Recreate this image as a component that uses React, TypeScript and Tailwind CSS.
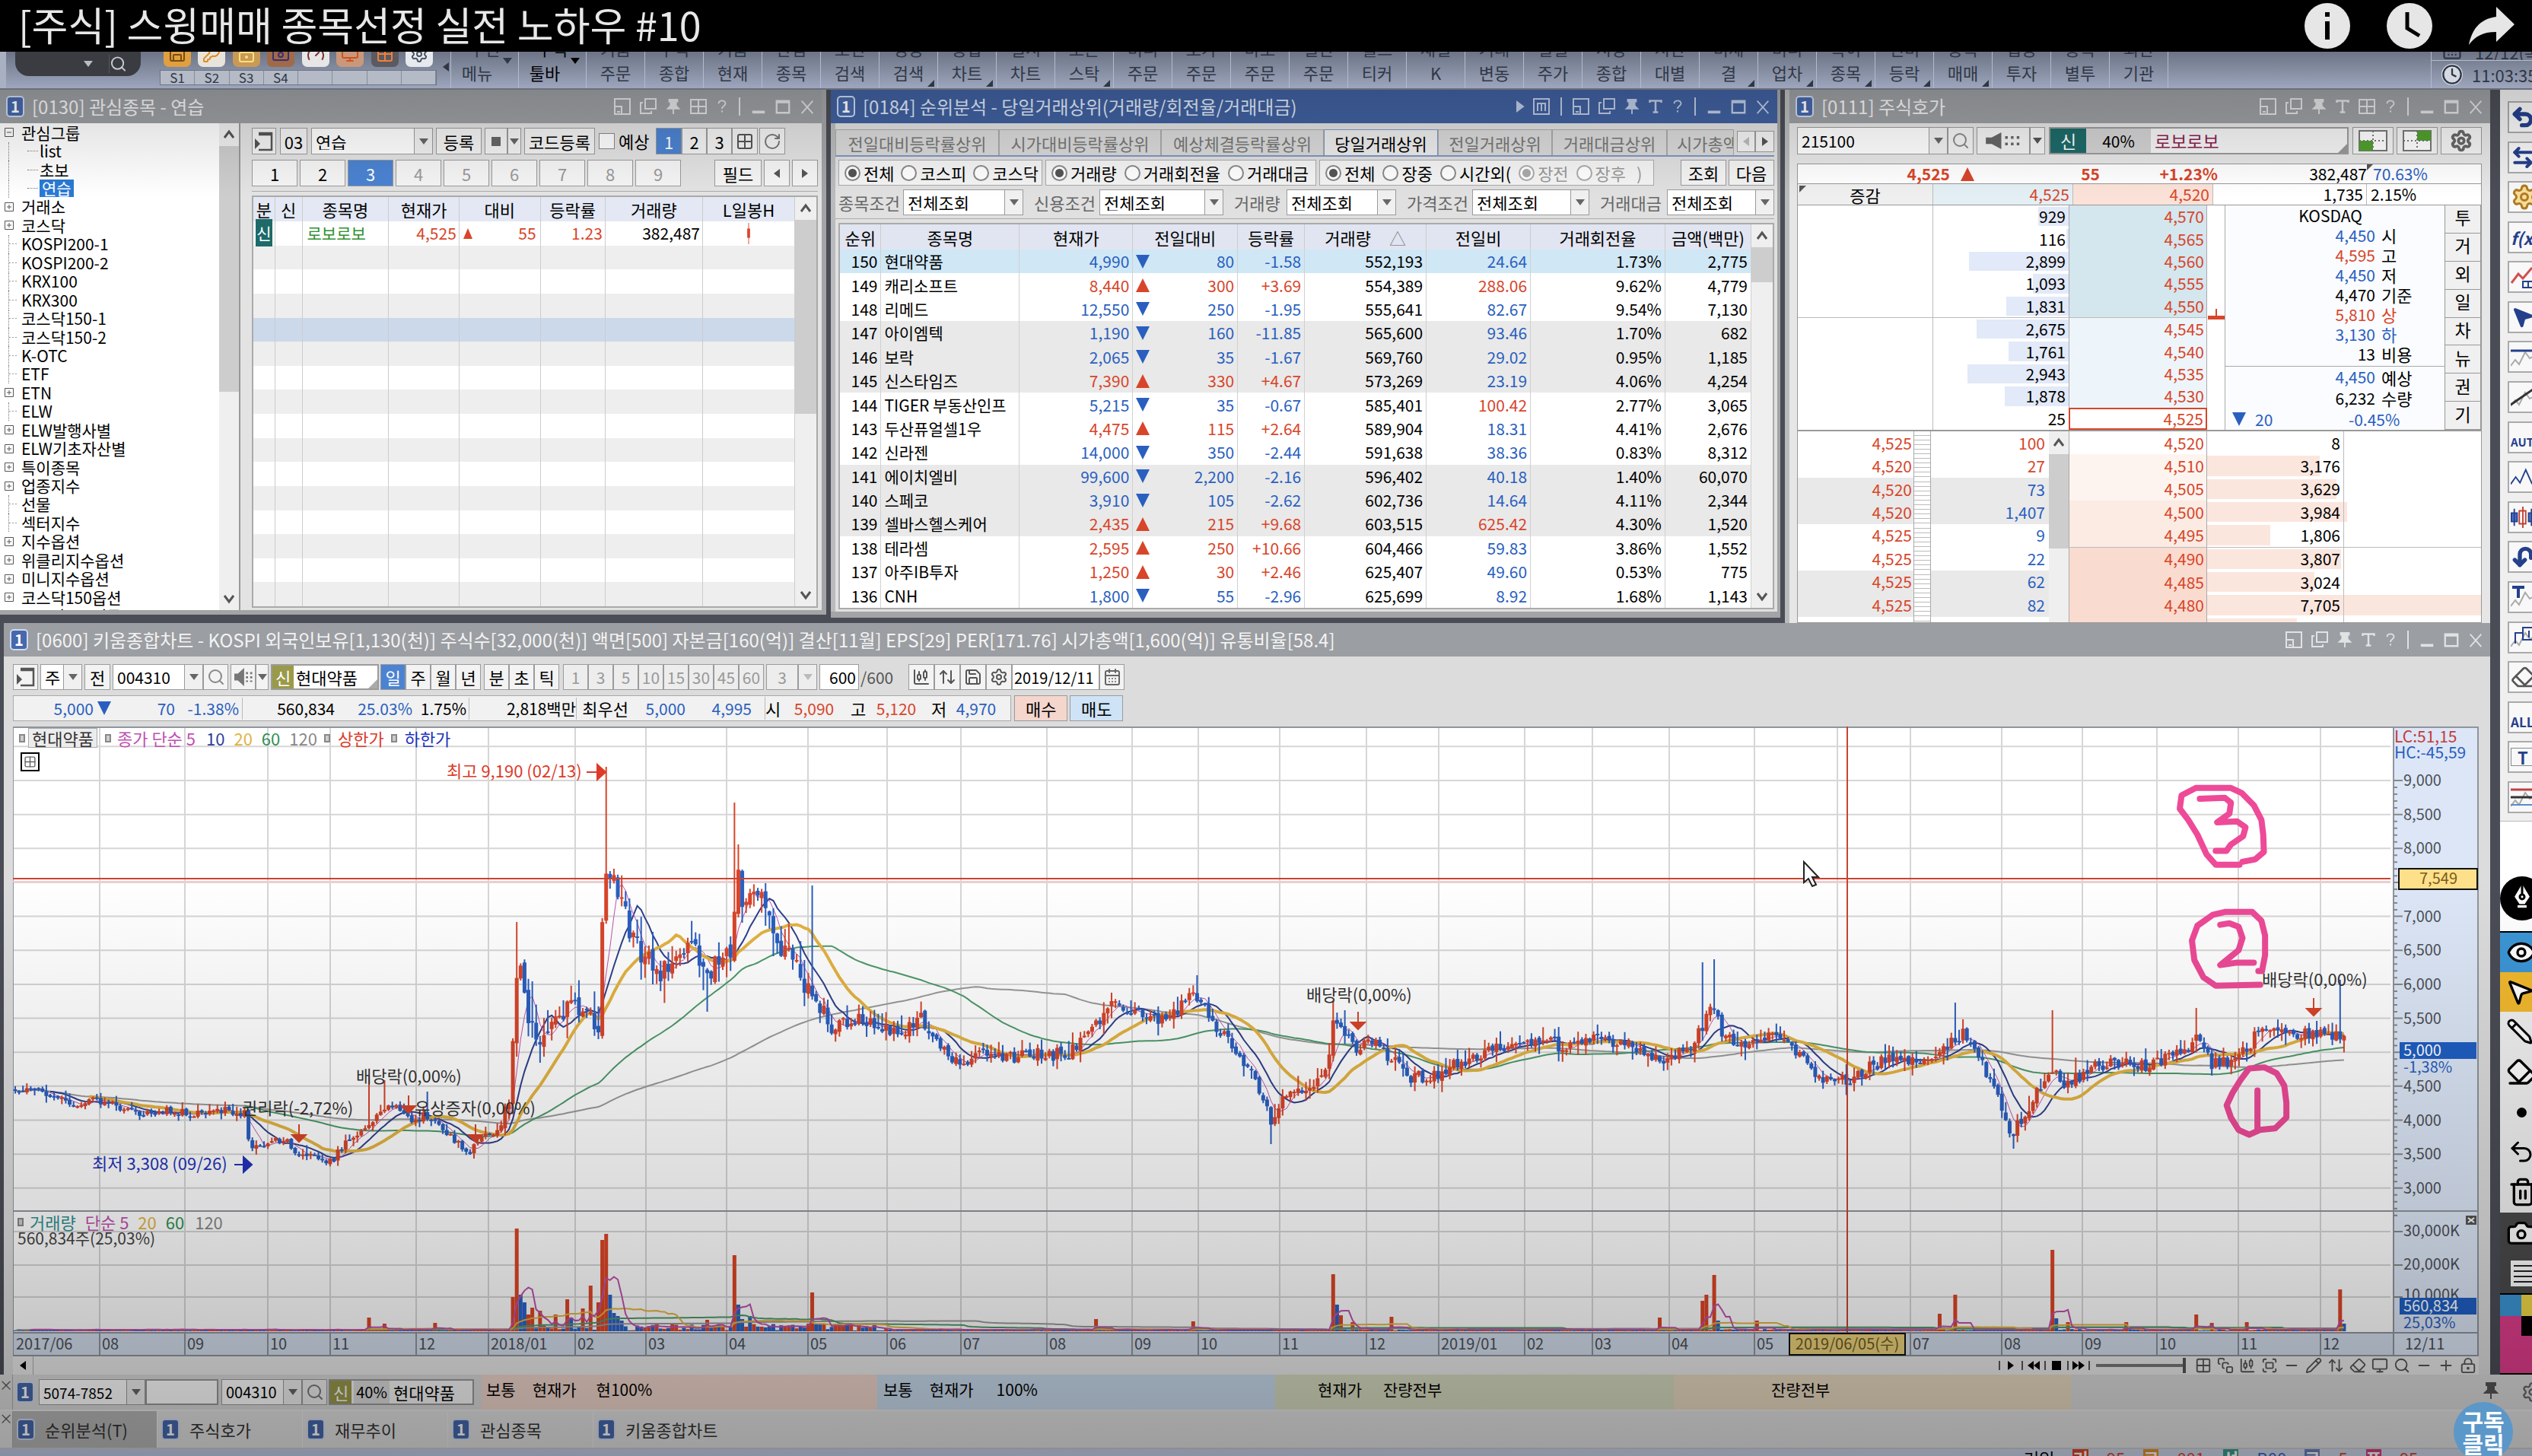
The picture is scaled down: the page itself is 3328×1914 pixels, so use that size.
import React from "react";
import {
  ArrowLeftRight, Camera, CalendarDays, ChartCandlestick, Clock, Eraser, Eye, Fullscreen, Grid2x2, KeyRound, LockKeyhole, Minus,
  Monitor, MousePointer2, PenTool, Pencil, Plus, RotateCw, Save, Search, Settings, SquareStack, Trash2, Undo2, ArrowUpDown, Gauge,
} from "lucide-react";

/* ---------- small shared pieces ---------- */

const RED = "#d8452a";
const BLUE = "#2a5fc0";

function Down({ className = "" }: { className?: string }) {
  return (
    <svg viewBox="0 0 12 8" className={`h-2 w-3 shrink-0 ${className}`} fill="currentColor" aria-hidden="true">
      <path d="M0 0h12L6 8z" />
    </svg>
  );
}

function Arrow({ up }: { up: boolean }) {
  return (
    <svg viewBox="0 0 18 18" className="h-[18px] w-[18px] shrink-0" aria-hidden="true">
      {up ? <path d="M9 0l9 18H0z" fill={RED} /> : <path d="M0 0h18L9 18z" fill={BLUE} />}
    </svg>
  );
}

function Side({ left, className = "" }: { left?: boolean; className?: string }) {
  return (
    <svg viewBox="0 0 8 12" className={`h-3 w-2 ${className}`} fill="currentColor" aria-hidden="true">
      {left ? <path d="M8 0v12L0 6z" /> : <path d="M0 0v12l8-6z" />}
    </svg>
  );
}

function Badge() {
  return (
    <span className="flex h-[28px] w-[24px] shrink-0 items-center justify-center rounded-[5px] border-2 border-[#cfdaf0] bg-[#4668ac] text-[20px] leading-none font-bold text-white">
      1
    </span>
  );
}

function Btn({ children, className = "", label }: { children?: React.ReactNode; className?: string; label?: string }) {
  return (
    <button
      type="button"
      aria-label={label}
      className={`flex h-full shrink-0 items-center justify-center border border-[#9b9b9b] leading-none whitespace-nowrap ${className}`}
    >
      {children}
    </button>
  );
}

function Select({ value, label, className = "" }: { value: string; label: string; className?: string }) {
  return (
    <span className={`relative flex h-full shrink-0 border border-[#9b9b9b] bg-white ${className}`}>
      <select aria-label={label} className="w-full appearance-none bg-transparent pl-[5px] leading-none text-black outline-none" defaultValue={value}>
        <option>{value}</option>
      </select>
      <span className="pointer-events-none absolute inset-y-0 right-0 flex w-[24px] items-center justify-center border-l border-[#9b9b9b] bg-[#f0f0f0] text-[#666]">
        <Down />
      </span>
    </span>
  );
}

function ScrollBar({ thumb, className = "" }: { thumb: string; className?: string }) {
  return (
    <div className={`flex shrink-0 flex-col items-center bg-[#efefef] text-[#555] ${className}`} aria-hidden="true">
      <svg viewBox="0 0 14 14" className="my-2 h-[14px] w-[14px] shrink-0" fill="none" stroke="currentColor" strokeWidth="3">
        <path d="M1 11l6-8 6 8" />
      </svg>
      <div className={`w-full shrink-0 bg-[#cdcdcd] ${thumb}`} />
      <svg viewBox="0 0 14 14" className="mt-auto mb-2 h-[14px] w-[14px] shrink-0" fill="none" stroke="currentColor" strokeWidth="3">
        <path d="M1 3l6 8 6-8" />
      </svg>
    </div>
  );
}

const glyphs: Record<string, React.ReactNode> = {
  corner: <path d="M2 2h20v20H2zM2 12h9v10M5 19h4" />,
  copy: <path d="M8 2h14v13H8zM5 7H2v14h14v-3" />,
  pin: <path d="M6 2h12v3h-2v6l4 4H4l4-4V5H6zM12 15v8" fill="currentColor" />,
  text: <path d="M3 6V3h18v3M12 3v18M8 21h8" strokeWidth="3" />,
  grid: <path d="M2 3h20v18H2zM12 3v18M2 12h20" />,
  help: <path d="M6 7c0-7 12-7 12 0 0 4-6 4-6 9M12 19v3" strokeWidth="2.5" />,
  macro: <path d="M2 2h20v20H2zM7 18V8h10v10M12 8v10" />,
  bar: <path d="M12 0v24" />,
  min: <path d="M3 20h18" strokeWidth="4" />,
  max: <path d="M3 4h18v17H3zM3 6h18" strokeWidth="2.5" />,
  close: <path d="M4 4l16 18M20 4L4 22" />,
  play: <path d="M8 6v12l8-6z" fill="currentColor" />,
};

const glyphWidth: Record<string, string> = {
  bar: "w-[8px]", play: "w-[12px]", text: "w-[20px]", help: "w-[18px]", pin: "w-[22px]", min: "w-[22px]", max: "w-[22px]", close: "w-[22px]",
};

function WindowBar({ title, icons, active }: { title: string; icons: string[]; active?: boolean }) {
  return (
    <header
      className={`flex h-[44px] shrink-0 items-center gap-[10px] pr-[8px] pl-[8px] text-[24px] leading-none ${
        active ? "bg-[#40609f] text-[#dfe8f8]" : "bg-[#9b9ea2] text-[#f3f3f3]"
      }`}
    >
      <Badge />
      <h2 className="whitespace-nowrap">{title}</h2>
      <div className="ml-auto flex items-center gap-[10px]">
        {icons.map((n, i) => (
          <button key={i} type="button" aria-label={n} className={`h-[24px] opacity-80 ${glyphWidth[n] ?? "w-[24px]"}`}>
            <svg viewBox={n === "bar" || n === "play" ? "8 0 8 24" : "0 0 24 24"} className="h-full w-full" fill="none" stroke="currentColor" strokeWidth="2">
              {glyphs[n]}
            </svg>
          </button>
        ))}
      </div>
    </header>
  );
}

/* ---------- top tool strip ---------- */

const menu: [string, string, string?][] = [
  ["주신", "메뉴", "d"], ["주식", "툴바", "d"], ["키움", "주문"], ["주식", "종합"], ["키움", "현재"], ["관심", "종목"],
  ["조건", "검색"], ["성능", "검색", "c"], ["종합", "차트", "c"], ["실시", "차트"], ["로본", "스탁", "c"], ["미니", "주문"],
  ["호가", "주문"], ["바로", "주문"], ["일반", "주문"], ["월드", "티커"], ["채널", "K"], ["거래", "변동"], ["일별", "주가"],
  ["시장", "종합"], ["시간", "대별"], ["미체", "결", "c"], ["미니", "업차", "c"], ["특이", "종목", "c"], ["전비", "등락", "c"],
  ["종목", "매매", "c"], ["집중", "투자"], ["종목", "별투"], ["외관", "기관"],
];

const quick: [React.ElementType, string][] = [
  [Save, "bg-[#e0a040] text-[#7a4c10]"], [KeyRound, "bg-[#e8e4dc] text-[#e08a20]"], [LockKeyhole, "bg-[#c99a55] text-[#ffe080]"],
  [Camera, "bg-[#a06a48] text-[#3a2f70]"], [Gauge, "bg-[#e6e6e6] text-[#803030]"], [Monitor, "bg-[#c9987a] text-[#d2501c]"],
  [Grid2x2, "bg-[#5a5a60] text-[#f0803a]"], [Settings, "bg-[#e6e9ee] text-[#4a5263]"],
];

function ToolStrip() {
  return (
    <nav className="flex h-[50px] shrink-0 overflow-hidden border-b-2 border-[#6b6f78] bg-linear-to-b from-[#6d7486] to-[#9da6bd] text-[#2f3745]">
      <div className="flex w-[200px] shrink-0 items-start border-l-8 border-[#a9b0c2]">
        <label className="ml-[12px] flex h-[32px] w-[165px] items-center rounded-b-[18px] bg-[#3b3c42]">
          <span className="sr-only">화면 검색</span>
          <input className="w-[90px] bg-transparent pl-3 text-white outline-none" />
          <Down className="text-[#b9bcc6]" />
          <Search className="ml-auto mr-[18px] h-6 w-6 border-l border-[#55575f] text-[#c9ccd6]" />
        </label>
      </div>
      <div className="w-[392px] shrink-0 pl-[10px]">
        <div className="grid w-[364px] grid-cols-8">
          {quick.map(([Icon, tone], i) => (
            <span key={i} className="flex h-[20px] items-end justify-center">
              <span className={`flex h-[34px] w-[36px] items-center justify-center rounded-[7px] ${tone}`}>
                <Icon className="h-6 w-6" />
              </span>
            </span>
          ))}
        </div>
        <div className="mt-[4px] flex items-center gap-[8px]">
          <div className="grid h-[20px] w-[364px] grid-cols-8 border border-[#6d7485] bg-[#b4bac6]">
            {["S1", "S2", "S3", "S4", "", "", "", ""].map((s, i) => (
              <span key={i} className="border-r border-[#858c9c] text-center text-[17px] leading-[18px]">{s}</span>
            ))}
          </div>
          <Side left className="-mt-7" />
        </div>
      </div>
      <ul className="flex text-[22px] leading-none">
        {menu.map(([a, b, mark], i) => (
          <li
            key={i}
            className={`relative flex h-[50px] flex-col justify-end gap-[10px] border-l border-[#b3bacb] pb-[12px] text-center ${i < 2 ? "w-[89px]" : "w-[77px]"} ${i === 1 ? "text-black" : ""}`}
          >
            <span>{a}</span>
            <span className={i < 2 ? "pr-5" : ""}>{b}</span>
            {mark === "d" && <Down className="absolute top-2 right-[8px]" />}
            {mark === "c" && (
              <svg viewBox="0 0 9 9" className="absolute right-1 bottom-1 h-[9px] w-[9px]" fill="currentColor">
                <path d="M9 0v9H0z" />
              </svg>
            )}
          </li>
        ))}
        <li className="border-l border-[#b3bacb]" />
      </ul>
      <div className="ml-auto flex w-[133px] shrink-0 flex-col border-l border-[#b3bacb] text-[22px] leading-none whitespace-nowrap">
        <div className="flex h-[12px] items-end gap-4 overflow-hidden border-b border-[#b3bacb] pl-[13px]">
          <CalendarDays className="h-7 w-7 shrink-0" />
          <span>12/12(목)</span>
        </div>
        <div className="flex h-[36px] items-center gap-[12px] pl-[13px]">
          <Clock className="h-7 w-7 shrink-0 rounded-full bg-[#d5d9e2]" />
          <span>11:03:35</span>
        </div>
      </div>
    </nav>
  );
}

/* ---------- watch list window ---------- */

const tree: [string, "m" | "p" | "" | "c" | "s"][] = [
  ["관심그룹", "m"], ["list", "c"], ["초보", "c"], ["연습", "s"], ["거래소", "p"], ["코스닥", "p"], ["KOSPI200-1", ""], ["KOSPI200-2", ""],
  ["KRX100", ""], ["KRX300", ""], ["코스닥150-1", ""], ["코스닥150-2", ""], ["K-OTC", ""], ["ETF", ""], ["ETN", "p"], ["ELW", ""],
  ["ELW발행사별", "p"], ["ELW기초자산별", "p"], ["특이종목", "p"], ["업종지수", "p"], ["선물", ""], ["섹터지수", ""], ["지수옵션", "p"],
  ["위클리지수옵션", "p"], ["미니지수옵션", "p"], ["코스닥150옵션", "p"], ["코스닥150선물", "p"],
];

function Tree() {
  return (
    <div className="h-full w-[288px] shrink-0 overflow-hidden bg-white">
      <ul className="flex h-[660px] flex-col text-[21px] leading-none text-black">
        {tree.map(([name, kind]) => (
          <li key={name} className="flex min-h-0 flex-1 items-center">
            <span className="flex w-[28px] shrink-0 items-center pl-[6px]">
              {kind === "m" || kind === "p" ? (
                <svg viewBox="0 0 12 12" className="h-3 w-3" fill="white" stroke="#555">
                  <path d="M.5.5h11v11H.5zM3 6h6" />
                  {kind === "p" && <path d="M6 3v6" />}
                </svg>
              ) : (
                <span className={`ml-[5px] h-6 w-3 border-l border-dotted border-[#777] ${kind ? "" : "bg-[repeating-linear-gradient(90deg,#999_0_2px,#fff_2px_4px)] bg-[length:100%_1px] bg-center bg-no-repeat"}`} />
              )}
            </span>
            {(kind === "c" || kind === "s") && <span className="mr-[2px] ml-2 h-px w-[14px] border-t border-dotted border-[#777]" />}
            <span className={`whitespace-nowrap ${kind === "s" ? "bg-[#2a7ad4] px-[3px] py-px text-white" : ""}`}>{name}</span>
          </li>
        ))}
      </ul>
    </div>
  );
}

function WatchWindow() {
  const head = ["분", "신", "종목명", "현재가", "대비", "등락률", "거래량", "L일봉H"];
  const cols = ["w-[4%]", "w-[5%]", "w-[16%]", "w-[13%]", "w-[15%]", "w-[12%]", "w-[18%]", "w-[17%]"];
  return (
    <section className="flex h-[690px] flex-col border-r-[6px] border-b-[6px] border-[#a2a4a6] bg-[#e3e3e3]">
      <WindowBar title="[0130] 관심종목 - 연습" icons={["corner", "copy", "pin", "grid", "help", "bar", "min", "max", "close"]} />
      <div className="flex min-h-0 flex-1">
        <Tree />
        <ScrollBar thumb="h-[323px]" className="w-[26px]" />
        <div className="flex min-w-0 flex-1 flex-col border-l-2 border-[#999] pt-[6px] pr-[5px] pl-[15px] text-[22px] text-black">
          <div className="flex h-[35px] shrink-0 items-center">
            <Btn label="펼치기" className="mr-[5px] w-[32px] bg-[#f3f3f3]"><PanelIcon /></Btn>
            <Btn className="mr-[5px] w-[36px] bg-[#f3f3f3]">03</Btn>
            <Select label="관심그룹" value="연습" className="mr-[4px] w-[160px]" />
            <Btn className="mr-[4px] w-[60px] bg-[#f3f3f3]">등록</Btn>
            <Btn className="w-[30px] bg-[#f3f3f3]" label="색상"><span className="h-3 w-3 bg-[#666]" /></Btn>
            <Btn className="mr-[4px] w-[18px] bg-[#f3f3f3]" label="색상 목록"><Down className="text-[#666]" /></Btn>
            <Btn className="mr-[5px] w-[93px] bg-[#f3f3f3]">코드등록</Btn>
            <label className="flex w-[75px] items-center gap-[5px] whitespace-nowrap">
              <input type="checkbox" className="h-[21px] w-[21px] shrink-0 appearance-none border border-[#888] bg-white" />
              예상
            </label>
            <Btn className="w-[34px] bg-[#4b83d2] text-white">1</Btn>
            <Btn className="w-[33px] bg-[#f3f3f3]">2</Btn>
            <Btn className="w-[33px] bg-[#f3f3f3]">3</Btn>
            <Btn className="mr-[2px] w-[34px] bg-[#f3f3f3]" label="표"><Grid2x2 className="h-6 w-6 text-[#555]" /></Btn>
            <Btn className="w-[34px] bg-[#f3f3f3]" label="새로고침"><RotateCw className="h-6 w-6 text-[#777]" /></Btn>
          </div>
          <div className="mt-[7px] flex h-[35px] shrink-0 gap-[3px]">
            {[1, 2, 3, 4, 5, 6, 7, 8, 9].map((n) => (
              <Btn key={n} className={`w-[60px] ${n === 3 ? "bg-[#4b83d2] text-white" : n < 3 ? "bg-[#f5f5f5]" : "bg-[#f5f5f5] text-[#999]"}`}>{n}</Btn>
            ))}
            <Btn className="ml-auto w-[62px] bg-[#f5f5f5]">필드</Btn>
            <Btn className="w-[34px] bg-[#f5f5f5] text-[#555]" label="이전"><Side left /></Btn>
            <Btn className="w-[34px] bg-[#f5f5f5] text-[#555]" label="다음"><Side /></Btn>
          </div>
          <div className="mt-[6px] mb-[3px] flex min-h-0 flex-1 border-t border-[#aaa] pt-[5px]">
            <div className="flex flex-1 border-2 border-[#aaa] bg-white">
              <table className="h-full min-w-0 flex-1 table-fixed border-collapse leading-none">
                <colgroup>{cols.map((c, i) => <col key={i} className={c} />)}</colgroup>
                <thead className="bg-[#e3e8f4]">
                  <tr className="h-[32px]">{head.map((h) => <th key={h} className="border-r border-[#ccc] p-0 font-normal whitespace-nowrap">{h}</th>)}</tr>
                </thead>
                <tbody>
                  <tr className="h-[31px] text-[21px] [&>td]:border-r [&>td]:border-[#ccc]">
                    <td className="text-center"><span className="bg-[#1d6a69] px-px py-[3px] text-white">신</span></td>
                    <td />
                    <td className="pl-[6px] text-[#2f9030]">로보로보</td>
                    <td className="pr-[3px] text-right text-[#d8452a]">4,525</td>
                    <td className="px-[5px]"><span className="flex items-center justify-between text-[#d8452a]"><svg viewBox="0 0 12 14" className="h-[14px] w-3"><path d="M6 0l6 14H0z" fill={RED} /></svg>55</span></td>
                    <td className="pr-[3px] text-right text-[#d8452a]">1.23</td>
                    <td className="pr-[3px] text-right">382,487</td>
                    <td><svg viewBox="0 0 6 30" className="mx-auto h-[28px] w-[6px]"><path d="M3 0v30" stroke={RED} /><path d="M1 8h4v13H1z" fill={RED} /></svg></td>
                  </tr>
                  {Array.from({ length: 15 }, (_, i) => (
                    <tr key={i} className={`h-[31px] ${i === 3 ? "bg-[#cbd9ea]" : i % 2 === 0 ? "bg-[#eeeeee]" : "bg-white"}`}>
                      {head.map((h) => <td key={h} className="border-r border-[#ccc]" />)}
                    </tr>
                  ))}
                </tbody>
              </table>
              <ScrollBar thumb="h-[255px]" className="w-[28px]" />
            </div>
          </div>
        </div>
      </div>
    </section>
  );
}

function PanelIcon() {
  return (
    <svg viewBox="0 0 24 26" className="h-[26px] w-6" fill="none" stroke="#555" strokeWidth="2.5" aria-hidden="true">
      <path d="M5 2h17v22H5M5 4h17" />
      <path d="M0 9l7 7-7 7z" fill="#555" stroke="none" />
    </svg>
  );
}

/* ---------- ranking window ---------- */

type Row = [number, string, string, boolean, string, string, string, string, boolean, string, string];
const rows: Row[] = [
  [150, "현대약품", "4,990", false, "80", "-1.58", "552,193", "24.64", false, "1.73%", "2,775"],
  [149, "캐리소프트", "8,440", true, "300", "+3.69", "554,389", "288.06", true, "9.62%", "4,779"],
  [148, "리메드", "12,550", false, "250", "-1.95", "555,641", "82.67", false, "9.54%", "7,130"],
  [147, "아이엠텍", "1,190", false, "160", "-11.85", "565,600", "93.46", false, "1.70%", "682"],
  [146, "보락", "2,065", false, "35", "-1.67", "569,760", "29.02", false, "0.95%", "1,185"],
  [145, "신스타임즈", "7,390", true, "330", "+4.67", "573,269", "23.19", false, "4.06%", "4,254"],
  [144, "TIGER 부동산인프", "5,215", false, "35", "-0.67", "585,401", "100.42", true, "2.77%", "3,065"],
  [143, "두산퓨얼셀1우", "4,475", true, "115", "+2.64", "589,904", "18.31", false, "4.41%", "2,676"],
  [142, "신라젠", "14,000", false, "350", "-2.44", "591,638", "38.36", false, "0.83%", "8,312"],
  [141, "에이치엘비", "99,600", false, "2,200", "-2.16", "596,402", "40.18", false, "1.40%", "60,070"],
  [140, "스페코", "3,910", false, "105", "-2.62", "602,736", "14.64", false, "4.11%", "2,344"],
  [139, "셀바스헬스케어", "2,435", true, "215", "+9.68", "603,515", "625.42", true, "4.30%", "1,520"],
  [138, "테라셈", "2,595", true, "250", "+10.66", "604,466", "59.83", false, "3.86%", "1,552"],
  [137, "아주IB투자", "1,250", true, "30", "+2.46", "625,407", "49.60", false, "0.53%", "775"],
  [136, "CNH", "1,800", false, "55", "-2.96", "625,699", "8.92", false, "1.68%", "1,143"],
];

function Radio({ name, label, on, off, gap = "" }: { name: string; label: string; on?: boolean; off?: boolean; gap?: string }) {
  return (
    <label className={`flex items-center gap-[4px] whitespace-nowrap ${off ? "text-[#999]" : "text-black"} ${gap}`}>
      <input
        type="radio"
        name={name}
        defaultChecked={on}
        disabled={off}
        className="h-[21px] w-[21px] shrink-0 appearance-none rounded-full border-2 border-[#888] bg-white checked:bg-[radial-gradient(#555_0_5px,#fff_6px)] disabled:border-[#aaa] disabled:checked:bg-[radial-gradient(#aaa_0_5px,#fff_6px)]"
      />
      {label}
    </label>
  );
}

function RankWindow() {
  const tabs: [string, string][] = [
    ["전일대비등락률상위", "w-[215px]"], ["시가대비등락률상위", "w-[213px]"], ["예상체결등락률상위", "w-[214px]"], ["당일거래상위", "w-[150px]"],
    ["전일거래상위", "w-[150px]"], ["거래대금상위", "w-[151px]"], ["시가총액상위", "w-[88px]"],
  ];
  const cols = ["w-[54px]", "w-[182px]", "w-[149px]", "w-[138px]", "w-[88px]", "w-[160px]", "w-[137px]", "w-[177px]", "w-[113px]"];
  const filters: [string, string, string][] = [
    ["종목조건", "w-[158px]", "w-[85px]"], ["신용조건", "w-[163px]", "w-[86px]"], ["거래량", "w-[144px]", "w-[69px]"],
    ["가격조건", "w-[154px]", "w-[86px]"], ["거래대금", "w-[141px]", "w-[88px]"],
  ];
  const head = ["순위", "종목명", "현재가", "전일대비", "등락률", "거래량", "전일비", "거래회전율", "금액(백만)"];
  return (
    <section className="flex h-[694px] flex-col border-r-[4px] border-b-[8px] border-[#a2a4a6] bg-[#e0e0e0]">
      <WindowBar active title="[0184] 순위분석 - 당일거래상위(거래량/회전율/거래대금)" icons={["play", "macro", "bar", "corner", "copy", "pin", "text", "help", "bar", "min", "max", "close"]} />
      <div className="flex min-h-0 flex-1 flex-col border-l-[6px] border-[#b9bbbd] pr-[4px] text-[22px] leading-none text-black">
        <div className="mt-[8px] flex h-[36px] shrink-0 border-b-2 border-[#7d97c4]" role="tablist">
          {tabs.map(([t, w], i) => (
            <button
              key={t}
              type="button"
              role="tab"
              className={`shrink-0 overflow-hidden border border-b-0 whitespace-nowrap ${w} ${
                i === 3 ? "border-[#7d97c4] bg-[#ececec]" : i === 6 ? "border-[#aaa] bg-[#d9d9d9] pl-[12px] text-left text-[#777]" : "border-[#aaa] bg-[#d9d9d9] text-[#777]"
              }`}
            >
              {t}
            </button>
          ))}
          <div className="mt-[2px] ml-auto flex h-[28px]">
            <Btn className="w-[24px] bg-[#f3f3f3] text-[#bbb]" label="왼쪽"><Side left /></Btn>
            <Btn className="w-[25px] bg-[#f3f3f3] text-[#555]" label="오른쪽"><Side /></Btn>
          </div>
        </div>
        <div className="mt-[4px] flex h-[34px] shrink-0 pl-[4px]">
          <div className="mr-[4px] flex w-[268px] items-center gap-[9px] border border-[#aaa] bg-[#f4f4f4] pl-[7px]">
            <Radio name="market" label="전체" on /><Radio name="market" label="코스피" /><Radio name="market" label="코스닥" />
          </div>
          <div className="mr-[4px] flex w-[356px] items-center gap-[10px] border border-[#aaa] bg-[#f4f4f4] pl-[7px]">
            <Radio name="kind" label="거래량" on /><Radio name="kind" label="거래회전율" /><Radio name="kind" label="거래대금" />
          </div>
          <div className="flex w-[440px] items-center gap-[10px] border border-[#aaa] bg-[#f4f4f4] pl-[7px]">
            <Radio name="time" label="전체" on /><Radio name="time" label="장중" /><Radio name="time" label="시간외(" />
            <Radio name="phase" label="장전" on off /><Radio name="phase" label="장후" off /><span className="pl-1 text-[#999]">)</span>
          </div>
          <Btn className="ml-auto w-[60px] bg-[#f3f3f3]">조회</Btn>
          <Btn className="ml-[3px] w-[60px] bg-[#f3f3f3]">다음</Btn>
        </div>
        <div className="mt-[5px] flex h-[34px] shrink-0 items-center justify-between pl-[4px]">
          {filters.map(([l, w, lw]) => (
            <div key={l} className="flex h-full items-center">
              <span className={`text-[#666] ${lw}`}>{l}</span>
              <Select label={l} value="전체조회" className={w} />
            </div>
          ))}
        </div>
        <div className="mt-[4px] flex min-h-0 flex-1 border-t border-[#aaa] pt-[5px] pb-[3px] pl-[4px]">
          <div className="flex flex-1 border-2 border-[#aaa] bg-white">
            <table className="h-full min-w-0 flex-1 table-fixed border-collapse">
              <colgroup>{cols.map((c, i) => <col key={i} className={c} />)}</colgroup>
              <thead className="bg-[#e1e5f1]">
                <tr className="h-[33px]">
                  {head.map((h) => (
                    <th key={h} className="border-r border-[#ccc] p-0 font-normal whitespace-nowrap">
                      {h}{h === "거래량" && <span className="pl-6 text-[#888]">△</span>}
                    </th>
                  ))}
                </tr>
              </thead>
              <tbody>
                {rows.map((r, i) => {
                  const tone = r[3] ? "text-[#d8452a]" : "text-[#2a5fc0]";
                  const bg = i === 0 ? "bg-[#d0e7f5]" : (i >= 3 && i <= 5) || (i >= 9 && i <= 11) ? "bg-[#e9e9e9]" : "";
                  return (
                    <tr key={r[0]} className={`h-[31px] text-right text-[21px] [&>td]:border-r [&>td]:border-[#d0d0d0] [&>td]:pr-[4px] ${bg}`}>
                      <td>{r[0]}</td>
                      <td className="overflow-hidden pl-[4px] text-left whitespace-nowrap">{r[1]}</td>
                      <td className={tone}>{r[2]}</td>
                      <td className={tone}><span className="flex items-center justify-between pl-[4px]"><Arrow up={r[3]} />{r[4]}</span></td>
                      <td className={tone}>{r[5]}</td>
                      <td>{r[6]}</td>
                      <td className={r[8] ? "text-[#d8452a]" : "text-[#2a5fc0]"}>{r[7]}</td>
                      <td>{r[9]}</td>
                      <td>{r[10]}</td>
                    </tr>
                  );
                })}
              </tbody>
            </table>
            <ScrollBar thumb="h-[46px]" className="w-[28px]" />
          </div>
        </div>
      </div>
    </section>
  );
}

/* ---------- order book window ---------- */

const asks: [string, string, number][] = [
  ["929", "4,570", 40], ["116", "4,565", 3], ["2,899", "4,560", 131], ["1,093", "4,555", 47], ["1,831", "4,550", 82],
  ["2,675", "4,545", 121], ["1,761", "4,540", 79], ["2,943", "4,535", 133], ["1,878", "4,530", 84], ["25", "4,525", 0],
];
const bids: [string, string, number][] = [
  ["4,520", "8", 0], ["4,510", "3,176", 148], ["4,505", "3,629", 170], ["4,500", "3,984", 184], ["4,495", "1,806", 83],
  ["4,490", "3,807", 176], ["4,485", "3,024", 141], ["4,480", "7,705", 361], ["4,475", "2,561", 118],
];
const ticks: [string, string, boolean][] = [
  ["4,525", "100", true], ["4,520", "27", true], ["4,520", "73", false], ["4,520", "1,407", false], ["4,525", "9", false],
  ["4,525", "22", false], ["4,525", "62", false], ["4,525", "82", false], ["4,525", "500", false],
];
const info: [string, string, string][] = [
  ["4,450", "시", "text-[#2a5fc0]"], ["4,595", "고", "text-[#d8452a]"], ["4,450", "저", "text-[#2a5fc0]"], ["4,470", "기준", ""],
  ["5,810", "상", "text-[#d8452a]"], ["3,130", "하", "text-[#2a5fc0]"], ["13", "비용", ""],
];

function BookWindow() {
  return (
    <section className="flex h-[701px] flex-col overflow-hidden border-l-[6px] border-[#b9bbbd] bg-[#e6e6e6]">
      <WindowBar title="[0111] 주식호가" icons={["corner", "copy", "pin", "text", "grid", "help", "bar", "min", "max", "close"]} />
      <div className="flex min-h-0 flex-1 flex-col pt-[5px] pr-[11px] pl-[10px] text-[21px] leading-none text-black">
        <div className="mb-[12px] flex h-[36px] shrink-0">
          <Select label="종목코드" value="215100" className="w-[198px]" />
          <Btn className="mr-[4px] w-[34px] bg-[#f3f3f3]" label="검색"><Search className="h-6 w-6 text-[#888]" /></Btn>
          <Btn className="w-[70px] bg-[#f3f3f3]" label="알림"><Speaker /></Btn>
          <Btn className="mr-[5px] w-[20px] bg-[#f3f3f3]" label="알림 목록"><Down className="text-[#555]" /></Btn>
          <div className="mr-[5px] flex min-w-0 flex-1 items-center border-2 border-[#9b9b9b] bg-[#f4f4f4] text-[23px]">
            <span className="flex h-full w-[47px] items-center justify-center bg-[#1d6a69] text-white">신</span>
            <span className="flex h-full w-[85px] items-center justify-center bg-[#d2d2d2] text-[21px]">40%</span>
            <span className="pl-[5px] text-[#8a2050]">로보로보</span>
            <svg viewBox="0 0 12 12" className="mt-auto ml-auto h-3 w-3"><path d="M12 0v12H0z" fill="#999" /></svg>
          </div>
          <Btn className="mr-[4px] w-[54px] bg-[#f3f3f3]" label="배치 1">
            <svg viewBox="0 0 38 28" className="h-[28px] w-[38px]" stroke="#777" strokeWidth="2"><path d="M1 1h36v26H1z" fill="#fff" /><path d="M1 14h18v13H1z" fill="#4fa02c" stroke="none" /><path d="M19 1v26M1 14h36" strokeDasharray="2 3" /></svg>
          </Btn>
          <Btn className="mr-[4px] w-[54px] bg-[#f3f3f3]" label="배치 2">
            <svg viewBox="0 0 38 28" className="h-[28px] w-[38px]" stroke="#777" strokeWidth="2"><path d="M1 1h36v26H1z" fill="#fff" /><path d="M19 1h18v13H19z" fill="#4fa02c" stroke="none" /><path d="M19 1v26M1 14h36" strokeDasharray="2 3" /></svg>
          </Btn>
          <Btn className="w-[54px] bg-[#f3f3f3]" label="설정"><Settings className="h-[30px] w-[30px] text-[#666]" strokeWidth={3} /></Btn>
        </div>
        <div className="flex min-h-0 flex-1 flex-col border border-[#999] bg-white">
          <div className="flex h-[26px] shrink-0 items-center border-b border-[#999] text-right">
            <b className="w-[200px] text-[#d8452a]">4,525</b>
            <span className="pl-[14px]"><Arrow up /></span>
            <b className="w-[165px] text-[#d8452a]">55</b>
            <b className="w-[155px] text-[#d8452a]">+1.23%</b>
            <span className="w-[196px]">382,487</span>
            <svg viewBox="0 0 9 9" className="mb-auto h-2 w-2"><path d="M0 0h9L0 9z" fill="#555" /></svg>
            <span className="text-[#2a5fc0]">70.63%</span>
          </div>
          <div className="flex h-[28px] shrink-0 border-b border-[#999] text-right [&>span]:flex [&>span]:items-center [&>span]:justify-end">
            <span className="relative w-[178px] border-r border-[#bbb] bg-[#efefef] !justify-center text-[22px]">
              <svg viewBox="0 0 9 9" className="absolute top-[2px] left-[2px] h-[9px] w-[9px]"><path d="M0 0h9L0 9z" fill="#555" /></svg>
              증감
            </span>
            <span className="w-[184px] border-r border-[#bbb] bg-[#e3eff4] pr-[4px] text-[#d8452a]">4,525</span>
            <span className="w-[184px] border-r border-[#bbb] bg-[#fbe2d8] pr-[4px] text-[#d8452a]">4,520</span>
            <span className="w-[202px] border-r border-[#bbb] pr-[4px]">1,735</span>
            <span className="pl-[5px]">2.15%</span>
          </div>
          <div className="flex h-[297px] shrink-0 border-b-2 border-[#999]">
            <div className="flex w-[538px] flex-col">
              {asks.map(([v, p, w], i) => (
                <div key={p} className={`flex min-h-0 flex-1 ${i === 4 ? "border-b border-[#bbb]" : ""}`}>
                  <span className="w-[178px] border-r border-[#bbb]" />
                  <span className="relative flex w-[178px] items-center justify-end pr-[4px]">
                    <span className="absolute top-[2px] right-0 bottom-[2px] bg-[#e2e9f8]" style={{ width: w }} />
                    <span className="relative">{v}</span>
                  </span>
                  <span
                    className={`flex w-[182px] items-center justify-end pr-[3px] text-[#d8452a] ${
                      i === 9 ? "border-2 border-[#d8452a] bg-white" : i < 5 ? "border-x border-[#aaa] bg-[#d4e6ee]" : "border-x border-[#aaa] bg-[#edf5fa]"
                    }`}
                  >
                    {p}
                  </span>
                </div>
              ))}
            </div>
            <div className="w-[24px] border-r border-[#aaa]">
              <svg viewBox="0 0 24 296" className="h-[296px] w-6"><path d="M12 136v10" stroke={RED} strokeWidth="2" /><path d="M1 145h22v5H1z" fill={RED} /></svg>
            </div>
            <div className="flex flex-1 flex-col bg-[#fafcff]">
              <div className="flex h-[26px] items-center justify-center pr-3">KOSDAQ</div>
              {info.map(([v, l, tone], i) => (
                <div key={i} className={`flex h-[26px] items-center ${tone}`}>
                  <span className="w-[197px] text-right">{v}</span>
                  <span className={`pl-[8px] text-[22px] ${i < 4 ? "text-black" : ""}`}>{l}</span>
                </div>
              ))}
              <div className="mt-[3px] flex h-[28px] items-center border-t border-[#aaa]"><span className="w-[197px] text-right text-[#2a5fc0]">4,450</span><span className="pl-[8px] text-[22px]">예상</span></div>
              <div className="flex h-[28px] items-center"><span className="w-[197px] text-right">6,232</span><span className="pl-[8px] text-[22px]">수량</span></div>
              <div className="flex h-[28px] items-center pl-[9px] text-[#2a5fc0]"><Arrow up={false} /><span className="pl-[12px]">20</span><span className="w-[167px] text-right">-0.45%</span></div>
            </div>
            <div className="flex w-[48px] flex-col">
              {["투", "거", "외", "일", "차", "뉴", "권", "기"].map((t) => (
                <button key={t} type="button" className="min-h-0 flex-1 border border-t-0 border-[#999] bg-[#f0f0f0] pb-[4px] text-[23px]">{t}</button>
              ))}
            </div>
          </div>
          <div className="flex min-h-0 flex-1 items-start overflow-hidden">
            <div className="flex h-[274px] w-[330px] shrink-0 flex-col">
              {ticks.map(([p, v, up], i) => (
                <div key={i} className={`flex flex-1 items-center text-right ${i === 2 || i === 3 || i === 6 || i === 7 ? "bg-[#e9e9e9]" : ""}`}>
                  <span className="w-[152px] pr-[2px] text-[#d8452a]">{p}</span>
                  <span className="h-full w-[23px] border-x border-[#aaa] bg-[repeating-linear-gradient(180deg,#fff_0_5px,#bbb_5px_6px)]" />
                  <span className={`w-[150px] ${up ? "text-[#d8452a]" : "text-[#2a5fc0]"}`}>{v}</span>
                </div>
              ))}
            </div>
            <ScrollBar thumb="h-[124px]" className="h-[300px] w-[26px]" />
            <div className="flex h-[274px] flex-1 flex-col">
              {bids.map(([p, v, w], i) => (
                <div key={p} className={`flex flex-1 ${i === 4 ? "border-b border-[#bbb]" : ""}`}>
                  <span
                    className={`flex w-[182px] items-center justify-end border-x border-[#aaa] pr-[3px] text-[#d8452a] ${
                      i === 0 ? "bg-white" : i < 3 ? "bg-[#fdf4ef]" : i < 5 ? "bg-[#fbebe3]" : "bg-[#fadbcf]"
                    }`}
                  >
                    {p}
                  </span>
                  <span className="relative flex flex-1">
                    <span className="absolute top-[2px] bottom-[2px] left-0 bg-[#fbe6de]" style={{ width: w }} />
                    <span className="relative flex w-[180px] items-center justify-end border-r border-[#bbb] pr-[4px]">{v}</span>
                  </span>
                </div>
              ))}
            </div>
          </div>
        </div>
      </div>
    </section>
  );
}

function Speaker() {
  return (
    <svg viewBox="0 0 54 26" className="h-[22px] w-[48px]" aria-hidden="true">
      <path d="M0 8h9L24 0v26L9 18H0z" fill="#666" />
      <path d="M30 8h22M30 18h22" stroke="#666" strokeWidth="4" strokeDasharray="4 5" />
    </svg>
  );
}

/* ---------- chart ---------- */

const path: [number, number][] = [
  [8, 675], [20, 674], [30, 679], [45, 684], [60, 681], [75, 687], [90, 690], [105, 687], [120, 690], [135, 687], [152, 690], [155, 712],
  [165, 710], [175, 705], [185, 714], [205, 720], [215, 706], [230, 695], [245, 682], [255, 697], [262, 690], [275, 700], [290, 714],
  [300, 705], [310, 697], [316, 690], [319, 615], [322, 602], [327, 630], [335, 646], [345, 636], [355, 624], [365, 628], [371, 640],
  [374, 545], [376, 530], [380, 545], [385, 562], [390, 575], [400, 593], [408, 605], [420, 588], [430, 588], [438, 604], [450, 590],
  [454, 585], [456, 535], [460, 562], [466, 548], [474, 556], [480, 590], [490, 595], [500, 612], [505, 612], [515, 638], [530, 630],
  [545, 635], [560, 640], [570, 630], [580, 645], [595, 662], [605, 650], [625, 655], [640, 652], [650, 655], [665, 650], [680, 632],
  [690, 622], [700, 628], [715, 630], [728, 628], [740, 615], [750, 632], [765, 650], [775, 665], [785, 690], [790, 696], [795, 680],
  [805, 675], [815, 668], [822, 662], [825, 632], [830, 635], [840, 650], [850, 645], [860, 655], [875, 668], [890, 665], [910, 655],
  [930, 648], [950, 645], [970, 648], [990, 643], [1010, 648], [1030, 655], [1045, 650], [1055, 635], [1060, 625], [1068, 642],
  [1080, 650], [1100, 640], [1115, 655], [1135, 673], [1150, 665], [1165, 658], [1180, 655], [1195, 660], [1205, 650], [1215, 640],
  [1225, 655], [1235, 675], [1245, 703], [1255, 690], [1262, 675], [1270, 660], [1280, 672], [1290, 665], [1305, 658], [1330, 660],
  [1345, 655], [1355, 650], [1360, 642], [1370, 659], [1385, 657], [1395, 645], [1400, 636], [1420, 640], [1430, 640], [1440, 642],
  [1450, 640], [1455, 650],
];
const K = 2.1224;
const COUNT = 600;
const xOf = (i: number) => 20 + i * 5.11;

function trend(x: number) {
  const u = x / K;
  for (let i = 1; i < path.length; i++) {
    if (u <= path[i][0]) {
      const [a, b] = path[i - 1];
      const [c, d] = path[i];
      return K * (b + ((d - b) * Math.max(0, u - a)) / (c - a));
    }
  }
  return K * 650;
}

let seed = 11;
const rnd = () => {
  seed = (seed * 1103515245 + 12345) % 2147483648;
  return seed / 2147483648;
};

const candles = (() => {
  const out: { x: number; o: number; c: number; h: number; l: number }[] = [];
  let prev = trend(20);
  for (let i = 0; i < COUNT; i++) {
    const x = xOf(i);
    const amp = x < 660 ? 10 : x < 1080 ? 36 : x < 1750 ? 19 : 17;
    const c = trend(x) + (rnd() - 0.5) * amp;
    const o = prev + (rnd() - 0.5) * amp * 0.3;
    out.push({ x, o, c, h: Math.min(o, c) - rnd() * rnd() * amp * 1.2 - 1, l: Math.max(o, c) + rnd() * rnd() * amp + 1 });
    prev = c;
  }
  const extremes: [number, number][] = [
    [680, 1212], [797, 1008], [967, 1055], [972, 1110], [1068, 1164], [1571, 1282], [1673, 1504], [1753, 1315], [1766, 1328], [2240, 1265],
    [2252, 1261], [2648, 1510], [2697, 1328], [2570, 1318], [2887, 1325], [3076, 1288], [765, 1325], [700, 1290], [485, 1415],
    [505, 1420], [560, 1435], [930, 1330], [1178, 1345],
  ];
  for (const [x, y] of extremes) {
    const k = out[Math.min(COUNT - 1, Math.max(0, Math.round((x - 20) / 5.11)))];
    if (y < k.h) k.h = y;
    if (y > k.l) k.l = y;
  }
  return out;
})();

const volumes = (() => {
  const v = candles.map((k) => {
    const busy = k.x > 670 && k.x < 1150 ? 9 : 2;
    return { y: 1 + rnd() * busy, up: k.c < k.o };
  });
  const spikes: [number, number, boolean][] = [
    [675, 45, true], [680, 135, true], [685, 48, false], [690, 38, false], [695, 22, true], [700, 31, true], [711, 27, true], [731, 22, true],
    [746, 42, true], [751, 18, false], [767, 30, true], [778, 60, true], [787, 38, true], [792, 120, true], [797, 128, true], [803, 48, false],
    [808, 24, false], [813, 20, false], [818, 14, false], [930, 15, true], [967, 100, true], [972, 35, false], [977, 16, false], [988, 20, false],
    [1068, 51, true], [1073, 9, false], [486, 18, true], [505, 10, true], [573, 11, true], [1443, 16, true], [1566, 13, true], [1750, 75, true],
    [1755, 35, false], [1765, 21, true], [1780, 12, true], [1827, 19, true], [2180, 18, true], [2236, 40, true], [2241, 48, true],
    [2251, 74, true], [2256, 14, false], [2311, 14, true], [2549, 23, true], [2570, 48, true], [2698, 107, true], [2703, 17, false],
    [2720, 12, true], [2793, 12, true], [2887, 22, true], [2908, 11, true], [2955, 12, true], [3076, 55, true], [3081, 10, false],
  ];
  for (const [x, y, up] of spikes) v[Math.round((x - 20) / 5.11)] = { y, up };
  return v;
})();

function average(values: number[], n: number) {
  let d = "";
  let sum = 0;
  values.forEach((y, i) => {
    sum += y;
    if (i >= n) sum -= values[i - n];
    if (i >= Math.min(n, 60) - 1 || n > 60) d += `${d ? "L" : "M"}${xOf(i).toFixed(1)} ${(sum / Math.min(n, i + 1)).toFixed(1)}`;
  });
  return d;
}

const closes = candles.map((k) => k.c);
const volY = volumes.map((v) => 1750 - v.y);
const gridX = [131, 243, 352, 434, 547, 642, 756, 849, 955, 1062, 1166, 1263, 1376, 1488, 1575, 1682, 1796, 1891, 2004, 2093, 2194, 2306, 2415, 2511, 2631, 2737, 2835, 2942, 3050];
const months = ["08", "09", "10", "11", "12", "2018/01", "02", "03", "04", "05", "06", "07", "08", "09", "10", "11", "12", "2019/01", "02", "03", "04", "05", "", "07", "08", "09", "10", "11", "12"];
const priceY = (p: number) => 1026 + (9000 - p) * 0.0893;
const prices = [9000, 8500, 8000, 7500, 7000, 6500, 6000, 5500, 5000, 4500, 4000, 3500, 3000];

function Note({ x, y, children, fill = "#333" }: { x: number; y: number; children: string; fill?: string }) {
  return <text x={x} y={y + 8} fill={fill} fontSize="22">{children}</text>;
}

function Chart() {
  return (
    <svg viewBox="17 955 3241 828" className="block h-auto w-full" role="img" aria-label="현대약품 일봉 차트">
      <rect x="17" y="955" width="3129" height="797" fill="#fff" />
      <rect x="3146" y="955" width="112" height="828" fill="#dce6f6" />
      <rect x="17" y="1752" width="3129" height="31" fill="#d3deed" />
      <g stroke="#d6d6d6" strokeWidth="2">
        {gridX.map((x) => <path key={x} d={`M${x} 955V1752`} />)}
        {[9500, ...prices].map((p) => <path key={p} d={`M17 ${priceY(p)}H3142`} />)}
        {[1619, 1663, 1705].map((y) => <path key={y} d={`M17 ${y}H3142`} />)}
      </g>
      <path d="M17 956H3258M17 955V1783M3146 955V1783M3257 955V1783M17 1592H3257M17 1752H3257M17 1782H3258" stroke="#8f959d" strokeWidth="2" fill="none" />
      <path d="M17 1159H3142" stroke="#f6c9cf" strokeWidth="2" />

      <g fill="none">
        <path d={average(closes, 120)} stroke="#9a9a9a" strokeWidth="2" />
        <path d={average(closes, 60)} stroke="#4d9a6a" strokeWidth="2" />
        <path d={average(closes, 10)} stroke="#2f3f8c" strokeWidth="2" />
        <path d={average(closes, 5)} stroke="#c050b0" strokeWidth="1" />
        <path d={average(closes, 20)} stroke="#e3b341" strokeWidth="4" />
      </g>
      {candles.map((k, i) => {
        const up = k.c < k.o;
        return (
          <g key={i} fill={up ? RED : BLUE}>
            <rect x={k.x - 1} y={k.h} width="2" height={k.l - k.h} />
            <rect x={k.x - 2.5} y={Math.min(k.o, k.c)} width="5" height={Math.max(2, Math.abs(k.o - k.c))} />
          </g>
        );
      })}

      {volumes.map((v, i) => <rect key={i} x={xOf(i) - 2.5} y={1750 - v.y} width="5" height={v.y} fill={v.up ? "#dd4526" : "#2a62c8"} />)}
      <g fill="none">
        <path d={average(volY, 120)} stroke="#9a9a9a" strokeWidth="2" />
        <path d={average(volY, 60)} stroke="#4d9a6a" strokeWidth="2" />
        <path d={average(volY, 20)} stroke="#e3b341" strokeWidth="2" />
        <path d={average(volY, 5)} stroke="#c050b0" strokeWidth="2" />
      </g>

      <path d="M17 1155H3142M2428 955V1752" stroke="#c8442f" strokeWidth="2" />

      <Note x={587} y={1014} fill="#dd3a2a">최고 9,190 (02/13)</Note>
      <path d="M771 1015h16M785 1005l11 10-11 10z" stroke="#dd3a2a" strokeWidth="2" fill="#dd3a2a" />
      <Note x={121} y={1530} fill="#2233bb">최저 3,308 (09/26)</Note>
      <path d="M308 1531h16M320 1521l11 10-11 10z" stroke="#2233bb" strokeWidth="2" fill="#2233bb" />
      <Note x={468} y={1415}>배당락(0,00%)</Note>
      <Note x={318} y={1457}>권리락(-2,72%)</Note>
      <Note x={545} y={1457}>유상증자(0,00%)</Note>
      <Note x={1717} y={1308}>배당락(0,00%)</Note>
      <Note x={2973} y={1288}>배당락(0,00%)</Note>
      {[[393, 1500], [537, 1462], [625, 1500], [1785, 1352], [3041, 1334]].map(([x, y]) => (
        <path key={x} d={`M${x} ${y - 22}v16M${x - 9} ${y - 8}h18l-9 9z`} stroke="#d8452a" strokeWidth="2" fill="#d8452a" />
      ))}

      <g fontSize="22" fill="#4c5057">
        <text x="3147" y="976" fill="#c23b3b" fontSize="21">LC:51,15</text>
        <text x="3147" y="997" fill="#2a5fc0" fontSize="21">HC:-45,59</text>
        {prices.filter((p) => p !== 7500 && p !== 5000).map((p) => <text key={p} x="3159" y={priceY(p) + 7} fontSize="20">{p.toLocaleString("en-US")}</text>)}
        {prices.map((p) => <path key={p} d={`M3146 ${priceY(p)}h12M3146 ${priceY(p) + 9}h5M3146 ${priceY(p) + 18}h5M3146 ${priceY(p) + 27}h5M3146 ${priceY(p) + 36}h5`} stroke="#888" strokeWidth="2" />)}
        <text x="3159" y="1625" fontSize="20">30,000K</text>
        <text x="3159" y="1669" fontSize="20">20,000K</text>
        <text x="3159" y="1709" fontSize="20">10,000K</text>
        <path d="M3146 1619h12M3146 1663h12M3146 1705h12" stroke="#888" strokeWidth="2" />
        <rect x="3153" y="1142" width="103" height="27" fill="#ffe08a" stroke="#111" strokeWidth="2" />
        <text x="3205" y="1162" textAnchor="middle" fontSize="20" fill="#7a5c1c">7,549</text>
        <rect x="3154" y="1370" width="101" height="22" fill="#1f5fc4" />
        <text x="3159" y="1388" fill="#fff" fontSize="20">5,000</text>
        <text x="3159" y="1410" fill="#2a5fc0" fontSize="20">-1,38%</text>
        <rect x="3154" y="1706" width="101" height="22" fill="#1f5fc4" />
        <text x="3159" y="1724" fill="#fff" fontSize="20">560,834</text>
        <text x="3159" y="1746" fill="#2a5fc0" fontSize="20">25,03%</text>
        <text x="3161" y="1774" fontSize="20">12/11</text>
        <rect x="3241" y="1598" width="14" height="12" fill="#555" />
        <path d="M3244 1601l8 6M3252 1601l-8 6" stroke="#fff" strokeWidth="2" />
      </g>
      <g fontSize="20" fill="#4c5057">
        <text x="21" y="1774">2017/06</text>
        {months.map((m, i) => (
          <g key={i}>
            <path d={`M${gridX[i]} 1752v31`} stroke="#8f959d" strokeWidth="2" />
            <text x={gridX[i] + 3} y="1774">{m}</text>
          </g>
        ))}
        <rect x="2352" y="1753" width="152" height="28" fill="#ecd27c" stroke="#111" strokeWidth="2" />
        <text x="2428" y="1774" textAnchor="middle" fill="#6b5a20">2019/06/05(수)</text>
      </g>

      <g transform="translate(2700 900) scale(.4005 .6467)" fill="none" stroke="#ee4a97" strokeWidth="8" strokeLinecap="round" strokeLinejoin="round">
        {[
          "M608 366L530 366L500 345L470 305L440 275L412 252L418 225L465 210L580 210L615 220L655 245L680 275L686 305L688 340L660 355L618 360",
          "M478 232L560 230L580 240L575 262L535 280L600 278L628 290L620 308L580 325L565 338L530 338",
          "M676 610L530 612L490 595L460 560L452 520L470 490L520 468L560 462L650 462L680 480L692 510L692 550L682 582L670 582",
          "M545 488L575 485L605 492L618 515L605 540L575 555L545 570L600 565L655 565",
          "M675 905L640 915L605 905L580 880L566 855L585 830L610 805L640 780L690 778L730 790L755 815L762 850L762 880L725 902L675 905",
          "M667 825L667 905",
        ].map((d) => <path key={d} d={d} vectorEffect="non-scaling-stroke" />)}
      </g>
      <path d="M2371 1133v27l6-5 5 10 5-2-5-10h8z" fill="#fff" stroke="#222" strokeWidth="2" />
    </svg>
  );
}

function Mark() {
  return <span className="h-[11px] w-[8px] border-2 border-[#888] bg-[#ccc]" />;
}

function ChartWindow() {
  const periods = ["일", "주", "월", "년", "분", "초", "틱"];
  const marks = [Grid2x2, SquareStack, ChartCandlestick, Fullscreen, Minus, Pencil, ArrowUpDown, Eraser, Monitor, Search, Minus, Plus, LockKeyhole];
  return (
    <section className="ml-[5px] flex flex-col bg-[#dcdcdc]">
      <WindowBar
        title="[0600] 키움종합차트 - KOSPI 외국인보유[1,130(천)] 주식수[32,000(천)] 액면[500] 자본금[160(억)] 결산[11월] EPS[29] PER[171.76] 시가총액[1,600(억)] 유통비율[58.4]"
        icons={["corner", "copy", "pin", "text", "help", "bar", "min", "max", "close"]}
      />
      <div className="flex flex-col pr-[15px] pl-[12px] text-[22px] leading-none text-black">
        <div className="mt-[10px] flex h-[34px] shrink-0">
          <Btn className="mr-[3px] w-[33px] bg-[#f3f3f3]" label="펼치기"><PanelIcon /></Btn>
          <Select label="구분" value="주" className="mr-[3px] w-[55px]" />
          <Btn className="mr-[3px] w-[34px] bg-[#f3f3f3]">전</Btn>
          <Select label="종목코드" value="004310" className="w-[119px] text-[21px]" />
          <Btn className="mr-[3px] w-[33px] bg-[#f3f3f3]" label="검색"><Search className="h-6 w-6 text-[#888]" /></Btn>
          <Btn className="w-[33px] bg-[#f3f3f3]" label="알림">
            <svg viewBox="0 0 26 26" className="h-6 w-6"><path d="M0 8h5l9-8v26l-9-8H0z" fill="#777" /><path d="M18 6v14M24 6v14" stroke="#777" strokeWidth="3" strokeDasharray="3 3" /></svg>
          </Btn>
          <Btn className="mr-[3px] w-[17px] bg-[#f3f3f3]" label="알림 목록"><Down className="text-[#666]" /></Btn>
          <div className="mr-[2px] flex w-[142px] items-center border-2 border-[#9b9b9b] bg-white">
            <span className="mr-[3px] flex h-full w-[28px] items-center justify-center bg-[#9a9a4a] text-white">신</span>현대약품
            <svg viewBox="0 0 12 12" className="mt-auto ml-auto h-3 w-3"><path d="M12 0v12H0z" fill="#aaa" /></svg>
          </div>
          {periods.map((p, i) => (
            <Btn key={p} className={`w-[33px] ${i === 0 ? "bg-[#4b83d2] text-white" : "bg-[#f3f3f3]"} ${i === 3 ? "mr-[4px]" : ""}`}>{p}</Btn>
          ))}
          <span className="w-[5px]" />
          {[1, 3, 5, 10, 15, 30, 45, 60].map((n) => <Btn key={n} className="w-[33px] bg-[#ededed] text-[21px] text-[#999]">{n}</Btn>)}
          <Btn className="ml-[3px] w-[42px] bg-[#ededed] text-[21px] text-[#999]">3</Btn>
          <Btn className="mr-[3px] w-[25px] bg-[#ededed] text-[#bbb]" label="목록"><Down /></Btn>
          <input aria-label="봉 개수" defaultValue="600" className="w-[52px] border border-[#9b9b9b] bg-white pr-[3px] text-right text-[21px] outline-none" />
          <span className="flex w-[65px] items-center pl-[2px] text-[21px] text-[#555]">/600</span>
          {[ChartCandlestick, ArrowUpDown, Save, Settings].map((Icon, i) => (
            <Btn key={i} className="w-[34px] bg-[#f3f3f3]" label="도구"><Icon className="h-6 w-6 text-[#555]" /></Btn>
          ))}
          <input aria-label="날짜" defaultValue="2019/12/11" className="w-[115px] border border-[#9b9b9b] bg-white pl-[2px] text-[20px] outline-none" />
          <Btn className="w-[33px] bg-[#f3f3f3]" label="달력"><CalendarDays className="h-6 w-6 text-[#666]" /></Btn>
        </div>
        <div className="mt-[7px] flex h-[34px] shrink-0">
          <div className="mr-[4px] flex items-center border border-[#aaa] bg-[#f1f1f1] text-right text-[21px] whitespace-nowrap">
            <span className="w-[105px] text-[#2a5fc0]">5,000</span>
            <span className="pl-[5px]"><Arrow up={false} /></span>
            <span className="w-[84px] text-[#2a5fc0]">70</span>
            <span className="mr-[4px] w-[84px] text-[#2a5fc0]">-1.38%</span>
            <span className="w-[122px] border-l border-[#bbb] py-1">560,834</span>
            <span className="w-[102px] text-[#2a5fc0]">25.03%</span>
            <span className="mr-[3px] w-[71px]">1.75%</span>
            <span className="w-[142px] border-x border-[#bbb] py-1">2,818백만</span>
            <span className="w-[68px] text-[22px]">최우선</span>
            <span className="w-[75px] text-[#2a5fc0]">5,000</span>
            <span className="w-[87px] text-[#2a5fc0]">4,995</span>
            <span className="mr-[4px] ml-[17px] border-l border-[#bbb] py-1 text-[22px]">시</span>
            <span className="w-[66px] text-[#d8452a]">5,090</span>
            <span className="w-[42px] text-[22px]">고</span>
            <span className="w-[66px] text-[#d8452a]">5,120</span>
            <span className="w-[40px] text-[22px]">저</span>
            <span className="w-[66px] pr-[1px] text-[#2a5fc0]">4,970</span>
            <span className="w-[18px]" />
          </div>
          <Btn className="mr-[3px] w-[70px] bg-[#f4d6cd]">매수</Btn>
          <Btn className="w-[70px] bg-[#cfe3f7]">매도</Btn>
        </div>
        <div className="relative mt-[7px]">
          <Chart />
          <div className="absolute top-[2px] left-[8px] flex h-[26px] items-center text-[22px] text-[#333]">
            <Mark /><span className="mx-[4px] mr-[10px] border border-[#aaa] bg-[#ececec] px-[4px] py-px">현대약품</span>
            <Mark /><span className="ml-[8px] text-[#c050b0]">종가 단순 5</span><span className="ml-[14px] text-[#2f3f9c]">10</span>
            <span className="ml-[12px] text-[#e3b341]">20</span><span className="ml-[12px] text-[#2f8f50]">60</span>
            <span className="mr-[9px] ml-[12px] text-[#888]">120</span><Mark /><span className="mr-[9px] ml-[10px] text-[#dd3a2a]">상한가</span>
            <Mark /><span className="ml-[10px] text-[#2233bb]">하한가</span>
          </div>
          <div className="absolute top-[34px] left-[10px] border-2 border-black bg-white p-[2px]">
            <Grid2x2 className="h-[17px] w-[17px] text-[#666]" />
          </div>
          <div className="absolute top-[640px] left-[6px] text-[22px] text-[#444]">
            <div className="flex items-center">
              <Mark /><span className="ml-[8px] text-[#2f8f8f]">거래량</span><span className="ml-[12px] text-[#c050b0]">단순 5</span>
              <span className="ml-[12px] text-[#e3b341]">20</span><span className="ml-[12px] text-[#2f8f50]">60</span><span className="ml-[14px] text-[#888]">120</span>
            </div>
            <div className="text-[21px]">560,834주(25,03%)</div>
          </div>
        </div>
        <div className="flex h-[24px] shrink-0 items-center overflow-hidden bg-[#eaeaea]">
          <span className="flex h-full w-[27px] items-center justify-center border-r border-[#aaa]"><Side left /></span>
          <div className="ml-auto flex items-center text-black">
            <span className="flex w-[30px] justify-center border-l-2 border-[#555]"><Side /></span>
            <span className="flex w-[30px] justify-center border-l-2 border-[#555]"><Side left /><Side left /></span>
            <span className="flex w-[30px] justify-center border-l-2 border-[#555]"><span className="h-3 w-3 bg-black" /></span>
            <span className="flex w-[30px] justify-center border-x-2 border-[#555]"><Side /><Side /></span>
            <input
              type="range"
              aria-label="재생 속도"
              defaultValue="100"
              className="mx-[8px] h-1 w-[118px] appearance-none bg-[#777] [&::-webkit-slider-thumb]:h-5 [&::-webkit-slider-thumb]:w-1 [&::-webkit-slider-thumb]:appearance-none [&::-webkit-slider-thumb]:bg-[#555]"
            />
            {marks.map((Icon, i) => (
              <span key={i} className="flex w-[29px] justify-center"><Icon className="h-[22px] w-[22px] text-[#555]" /></span>
            ))}
          </div>
        </div>
      </div>
    </section>
  );
}

/* ---------- right hand tool columns ---------- */

function SideTools() {
  const navy = "#24408c";
  const icons: React.ReactNode[] = [
    <Undo2 className="h-8 w-8 text-[#24408c]" strokeWidth={4} />,
    <ArrowLeftRight className="h-8 w-8 text-[#24408c]" strokeWidth={3} />,
    <Settings className="h-9 w-9 text-[#b07a20]" fill="#f6dc9a" strokeWidth={2} />,
    <span className="text-[22px] font-bold text-[#24408c] italic">f(x)</span>,
    <svg viewBox="0 0 32 32" className="h-8 w-8" fill="none" stroke="#d05050" strokeWidth="3"><path d="M1 24l9-12 6 6L28 4" /><path d="M16 22h14v8H16zM23 22v8" stroke={navy} strokeWidth="2" /></svg>,
    <MousePointer2 className="h-8 w-8 text-[#24408c]" fill={navy} />,
    <Wave><path d="M0 8h34" stroke={navy} strokeWidth="3" /></Wave>,
    <Wave><path d="M0 26L32 4" stroke="#333" strokeWidth="3" /></Wave>,
    <span className="pt-3 text-[15px] font-bold text-[#24408c]">AUTO</span>,
    <svg viewBox="0 0 34 32" className="h-8 w-8" fill="none" stroke={navy} strokeWidth="2"><path d="M0 26l7-10 6 8 8-18 9 20" /></svg>,
    <svg viewBox="0 0 34 32" className="h-8 w-8" fill="#4a74d0" stroke={navy} strokeWidth="2"><path d="M5 4v24M29 4v24M1 10h8v12H1zM25 10h8v12h-8z" /><path d="M17 1v30M12 7h9v18h-9z" fill="#fff" stroke="#c04030" /></svg>,
    <Undo2 className="h-8 w-8 rotate-270 text-[#24408c]" strokeWidth={4} />,
    <Wave><path d="M2 3h16M10 3v14" stroke={navy} strokeWidth="4" /></Wave>,
    <Wave><path d="M6 24V10h10M16 3h16v16H16zM24 7v9" stroke={navy} strokeWidth="2" /></Wave>,
    <Eraser className="h-8 w-8 text-[#555]" />,
    <span className="pt-3 text-[17px] font-bold text-[#24408c]">ALL</span>,
    <span className="border border-[#888] px-2 text-[22px] font-bold text-[#24408c]">T</span>,
    <Wave><path d="M0 6h34" stroke="#c04040" strokeWidth="3" /><path d="M0 16h34" stroke="#333" strokeWidth="3" /><path d="M0 26h34" stroke="#5a8ad0" strokeWidth="2" /></Wave>,
  ];
  return (
    <aside className="flex w-[42px] shrink-0 flex-col overflow-hidden bg-white">
      <div className="flex h-[962px] shrink-0 flex-col justify-between border-b border-[#bbb] bg-[#efefef] pt-[15px] pb-[10px] pl-[10px]">
        {icons.map((icon, i) => (
          <button key={i} type="button" aria-label={`도구 ${i + 1}`} className="flex h-[42px] w-[44px] items-center overflow-hidden border-2 border-[#aaa] bg-[#f8f8f8] pl-[2px] leading-none">
            {icon}
          </button>
        ))}
      </div>
      <div className="flex flex-1 flex-col pt-[72px] text-black">
        <span className="mb-[14px] flex h-[58px] w-[58px] shrink-0 items-center justify-center rounded-full bg-black"><PenTool className="h-9 w-9 rotate-45 text-white" fill="#fff" stroke="#000" /></span>
        <span className="flex h-[54px] shrink-0 items-center border-t-2 border-black bg-[#3c96d6] pl-[8px]"><Eye className="h-10 w-10 shrink-0" fill="#fff" /></span>
        <span className="flex h-[52px] shrink-0 items-center bg-[#f2b92e] pl-[6px]"><MousePointer2 className="h-10 w-10 shrink-0" fill="#fff" /></span>
        <span className="flex h-[52px] shrink-0 items-center bg-[#f1f1f1] pl-[8px]"><Pencil className="h-9 w-9 shrink-0 -scale-x-100" fill="#fff" /></span>
        <span className="flex h-[54px] shrink-0 items-center bg-[#f1f1f1] pl-[8px]"><Eraser className="h-10 w-10 shrink-0 -scale-x-100" fill="#fff" /></span>
        <span className="flex h-[52px] shrink-0 items-center bg-[#f1f1f1] pl-[22px]"><span className="h-[13px] w-[13px] rounded-full bg-black" /></span>
        <span className="flex h-[52px] shrink-0 items-center bg-[#f1f1f1] pl-[10px]"><Undo2 className="h-9 w-9 shrink-0" /></span>
        <span className="flex h-[54px] shrink-0 items-center bg-[#f1f1f1] pl-[10px]"><Trash2 className="h-10 w-10 shrink-0" /></span>
        <span className="flex h-[54px] shrink-0 items-center bg-[#4a4a4a] pl-[8px]"><Camera className="h-10 w-10 shrink-0" fill="#fff" /></span>
        <span className="flex h-[54px] shrink-0 items-center border-b-2 border-black bg-[#4a4a4a] pl-[14px]">
          <svg viewBox="0 0 36 34" className="h-[34px] w-9 shrink-0"><path d="M0 0h36v34H0z" fill="#fff" /><path d="M4 7h28M4 14h28M4 21h28M4 28h28" stroke="#222" strokeWidth="2" /></svg>
        </span>
        <span className="grid h-[28px] shrink-0 grid-cols-[28px_1fr]"><i className="bg-[#3c96d6]" /><i className="bg-[#f0d848]" /></span>
        <span className="flex flex-1 items-start justify-end border-b-2 border-black bg-[#e03d8c]"><i className="h-[26px] w-[14px] bg-black" /></span>
      </div>
    </aside>
  );
}

function Wave({ children }: { children: React.ReactNode }) {
  return (
    <svg viewBox="0 0 34 32" className="h-8 w-[34px] shrink-0" fill="none">
      <path d="M0 28l6-8 5 6 8-16 6 8 8-4" stroke="#aaa" strokeWidth="2" />
      {children}
    </svg>
  );
}

/* ---------- bottom bars ---------- */

function BottomBars() {
  return (
    <>
      <div className="flex h-[48px] shrink-0 overflow-hidden border-b-2 border-[#e8e8e8] bg-[#dadada] text-[22px] leading-none text-black">
        <span className="flex w-[17px] shrink-0 justify-center border-r border-[#aaa] pt-1 text-[18px] text-[#555]">×</span>
        <div className="flex h-[46px] shrink-0 items-center py-[6px] pl-[4px]">
          <Badge />
          <Select label="계좌" value="5074-7852" className="ml-[6px] w-[140px] text-[19px]" />
          <input aria-label="비밀번호" className="h-full w-[96px] border-2 border-[#999] bg-white" />
          <Select label="종목코드" value="004310" className="ml-[4px] w-[106px] text-[20px]" />
          <Btn className="mr-[2px] w-[33px] bg-[#eee]" label="검색"><Search className="h-6 w-6 text-[#777]" /></Btn>
          <span className="flex h-full w-[191px] items-center border-2 border-[#999] bg-[#f6f6f6]">
            <span className="flex h-full w-[28px] items-center justify-center bg-[#9a9a4a] text-white">신</span>
            <span className="ml-[3px] flex h-full w-[47px] items-center justify-center bg-[#ddd] text-[20px]">40%</span>
            <span className="pl-[5px]">현대약품</span>
          </span>
        </div>
        <div className="ml-[10px] flex h-full flex-1 text-[21px] whitespace-pre [&>div]:pt-[9px]">
          <div className="w-[520px] bg-[#efd5cb] pl-[6px]"><span className="mr-[22px]">보통</span><span className="mr-[26px]">현재가</span>현100%</div>
          <div className="w-[523px] bg-[#c9daec] pl-[8px]"><span className="mr-[22px]">보통</span><span className="mr-[30px]">현재가</span>100%</div>
          <div className="w-[524px] bg-[#d6dabf] pl-[56px]"><span className="mr-[28px]">현재가</span>잔량전부</div>
          <div className="w-[522px] bg-[#e8d9c0] pl-[128px]">잔량전부</div>
        </div>
        <svg viewBox="0 0 24 24" className="mt-[9px] mr-[28px] h-6 w-6 text-[#555]" fill="none" stroke="currentColor" strokeWidth="2">{glyphs.pin}</svg>
        <Settings className="mt-[9px] -mr-[14px] h-7 w-7 shrink-0 text-[#666]" />
      </div>
      <div className="flex h-[50px] shrink-0 items-stretch border-b-2 border-[#c9c9c9] bg-[#e1e1e1] text-[22px] leading-none text-[#333]">
        <span className="flex w-[17px] justify-center border-r border-[#aaa] text-[18px] text-[#555]">×</span>
        {["순위분석(T)", "주식호가", "재무추이", "관심종목", "키움종합차트"].map((t, i) => (
          <button key={t} type="button" className={`flex items-center gap-[13px] border-r border-[#ededed] pl-[5px] ${i === 0 ? "w-[190px] bg-[#b6b6b6]" : i === 4 ? "w-[220px] border-r-0" : "w-[191px]"}`}>
            <Badge />{t}
          </button>
        ))}
      </div>
      <div className="flex h-[9px] shrink-0 items-start gap-[24px] overflow-hidden bg-linear-to-r from-[#c0cbe8] to-[#d0d8ea] pl-[2660px] text-[22px] leading-none whitespace-nowrap text-[#d8452a]">
        <span className="text-black">거입</span><b className="bg-[#d8452a] text-white">기</b><span>95</span><b className="bg-[#e09030] text-white">로</b><span>001</span>
        <b className="bg-[#3a9a8a] text-white">선</b><span className="text-[#2a5fc0]">B00</span><b className="bg-[#6a80b8] text-white">로</b><span>5</span><b className="bg-[#d04080] text-white">표</b><span>95</span>
      </div>
    </>
  );
}

export default function App() {
  return (
    <div className="relative flex h-screen min-w-[3200px] flex-col overflow-hidden bg-[#4b4d56] font-['Noto_Sans_CJK_KR','Noto_Sans',sans-serif]">
      <header className="flex h-[68px] shrink-0 items-center bg-black pl-[24px] text-[#e8e8e8]">
        <h1 className="-mt-1 text-[52px] leading-none">[주식] 스윙매매 종목선정 실전 노하우 #10</h1>
        <div className="ml-auto flex items-center gap-[48px] pr-[23px]">
          <button type="button" aria-label="정보">
            <svg viewBox="0 0 60 60" className="h-[60px] w-[60px]"><circle cx="30" cy="30" r="30" fill="#e6e6e6" /><path d="M27 12h6v6h-6zM27 24h6v24h-6z" fill="#000" /></svg>
          </button>
          <button type="button" aria-label="나중에 볼 동영상">
            <svg viewBox="0 0 60 60" className="h-[60px] w-[60px]"><circle cx="30" cy="30" r="30" fill="#e6e6e6" /><path d="M27 12v21l16 10" stroke="#000" strokeWidth="5" fill="none" /></svg>
          </button>
          <button type="button" aria-label="공유">
            <svg viewBox="0 0 60 50" className="h-[50px] w-[60px]"><path d="M36 0l24 23-24 23V33C18 33 8 39 0 50 4 30 14 16 36 13z" fill="#e6e6e6" /></svg>
          </button>
        </div>
      </header>
      <ToolStrip />
      <div className="flex shrink-0">
        <main className="min-w-0 flex-1 pr-[13px]">
          <div className="grid h-[701px] grid-cols-[1086fr_1248fr_927fr] items-start gap-x-[6px] overflow-hidden">
            <WatchWindow />
            <RankWindow />
            <BookWindow />
          </div>
          <ChartWindow />
        </main>
        <SideTools />
      </div>
      <BottomBars />
      <div className="pointer-events-none absolute inset-x-0 top-[118px] h-[140px] bg-linear-to-b from-black/15 to-transparent" />
      <div className="pointer-events-none absolute inset-x-0 bottom-0 h-[760px] bg-linear-to-b from-transparent via-black/15 via-60% to-black/30" />
      <button type="button" className="absolute right-[25px] bottom-[-7px] flex h-[78px] w-[78px] items-center justify-center rounded-full bg-[#5b97c9] text-[30px] leading-[30px] font-bold text-white">
        <span>구독<br />클릭</span>
      </button>
    </div>
  );
}
